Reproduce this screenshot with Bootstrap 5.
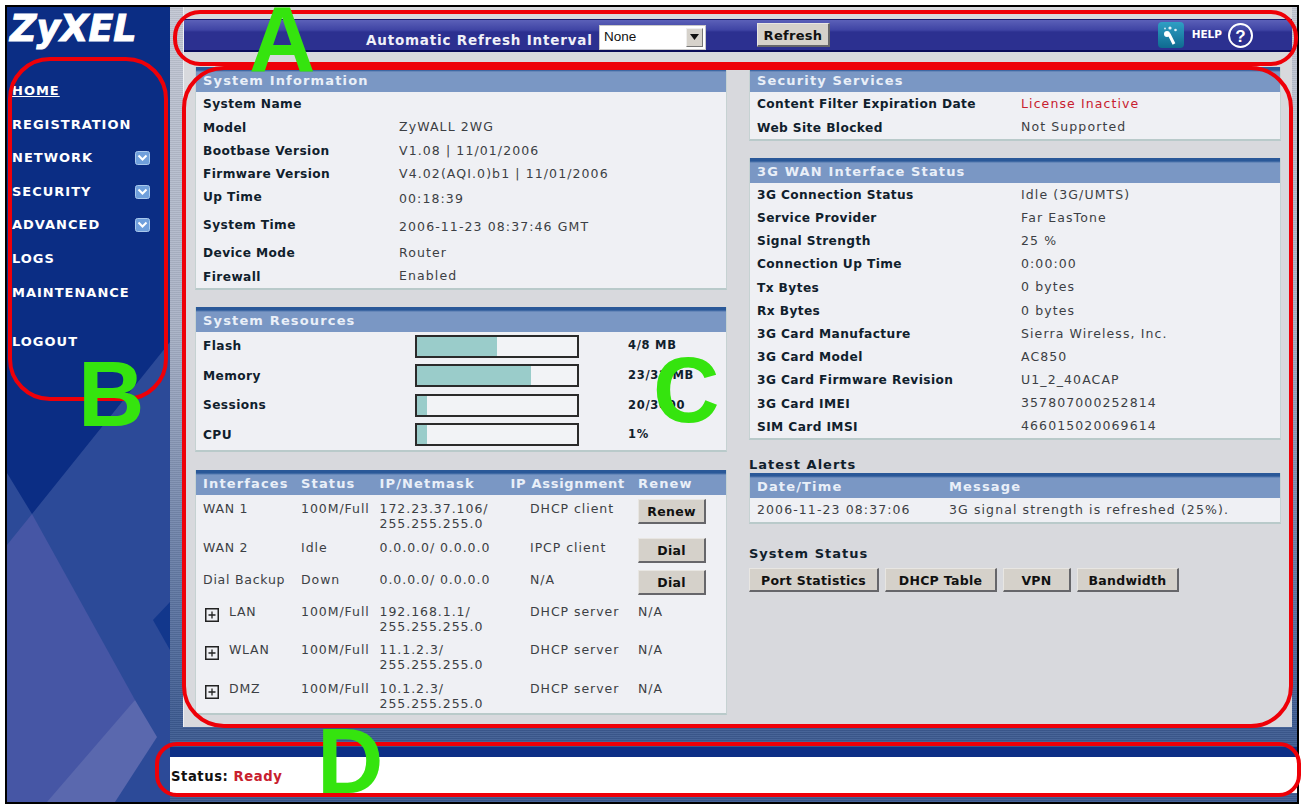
<!DOCTYPE html>
<html lang="en">
<head>
    <meta charset="UTF-8">
    <meta name="viewport" content="width=device-width, initial-scale=1.0">
    <title>ZyXEL Status</title>
    <link href="https://cdn.jsdelivr.net/npm/bootstrap@5.3.3/dist/css/bootstrap.min.css" rel="stylesheet">
    <style>
        html, body { margin: 0; background: #fff; overflow: hidden; }
        body { font-family: "DejaVu Sans", Verdana, sans-serif; font-size: 12.5px; color: #333; }
        .page-wrap { position: relative; width: 1306px; height: 809px; padding: 5px 0 0 5px; }
        .frame-box { width: 1294px; height: 799px; border: 2px solid #000; background: #0d2f86; }

        /* sidebar */
        .side-col { position: relative; width: 163px; flex: none; background: #0b2d84; overflow: hidden; }
        .side-art { position: absolute; left: 0; top: 0; }
        .side-inner { position: relative; }
        .zy-logo { font-weight: 700; font-style: italic; font-size: 36.5px; line-height: 44px; color: #fff; height: 67px; padding-left: 3px; -webkit-text-stroke: 1px #fff; }
        .side-link { display: flex; align-items: center; justify-content: space-between; height: 33.6px; padding: 0 20px 0 5px; color: #fff; font-weight: 700; font-size: 13px; letter-spacing: 1px; text-decoration: none; }
        .side-link.is-on { text-decoration: underline; }
        .side-gap { height: 16px; }

        /* main */
        .main-col { width: 1127px; background: repeating-linear-gradient(180deg, rgba(255,255,255,.06) 0 1px, rgba(0,0,0,.06) 1px 2px), linear-gradient(180deg, #c3c8d4 0%, #a9b2c6 40%, #3d5b92 90%); }
        .content-box { margin: 0 5px 0 13px; height: 720px; background: #d8d9dd; border-left: 1px solid #eef0f4; padding-top: 12px; }
        .top-bar { height: 33px; background: linear-gradient(180deg, #5b60b8 0, #3f44a4 10px, #2c3090 12px, #2c3090 100%); border-top: 1px solid #14186a; border-bottom: 2px solid #0a0c5a; color: #f0f0f8; }
        .refresh-label { width: 415px; padding: 10px 0 0 182px; font-weight: 700; font-size: 13.5px; letter-spacing: .8px; white-space: nowrap; }
        .select-box { width: 107px; height: 25px; margin-top: 4px; background: #fff; border: 1px solid #c8c8c8; }
        .select-box .form-select { height: 100%; padding: 0 0 0 4px; border: 0; border-radius: 0; background: none; font-family: "Liberation Sans", Arial, sans-serif; font-size: 13.5px; color: #111; appearance: none; }
        .select-arrow { width: 17px; height: 19px; margin: 2px; background: #d6d2cb; border: 1px solid #777; border-top-color: #eee; border-left-color: #eee; flex: none; }
        .zy-btn { padding: 1px 0 0; border-radius: 0; background: #d5d1ca; color: #111; font-weight: 700; font-size: 12.5px; letter-spacing: .3px; border: 1px solid #e8e6e2; border-right: 2px solid #66666a; border-bottom: 2px solid #66666a; height: 24px; line-height: 21px; white-space: nowrap; }
        .zy-btn:hover { background: #d5d1ca; color: #111; }
        .btn-refresh { width: 73px; margin-left: 51px; font-size: 13px; }
        .help-txt { font-size: 10.5px; font-weight: 700; color: #fff; margin: 0 5px 0 8px; }
        .help-wrap { padding-right: 38px; }

        .panels-wrap { padding: 15px 0 0 11px; gap: 22px; }
        .panel-col { width: 532px; }
        .zy-panel { border: 0; border-radius: 0; background: #eff0f4; border-left: 1px solid #c6d2d2; border-right: 1px solid #c6d2d2; border-bottom: 2px solid #b9caca; }
        .zy-panel .card-header { height: 25px; padding: 4px 7px 0; border: 0; border-radius: 0; background: linear-gradient(180deg, #2a5898 0, #2a5898 3px, #7a97c4 5px); color: #e9eff8; font-weight: 700; font-size: 13px; letter-spacing: 1.15px; line-height: 20px; white-space: nowrap; display: flex; }
        .zy-panel .card-header span { flex: none; }
        .zy-panel .card-body { padding: 0; }
        .zy-panel .card-body.body-nudge { padding-top: 1px; }
        .info-row { display: flex; height: 23.2px; padding-left: 7px; align-items: center; white-space: nowrap; }
        .info-row .lbl { color: #10202c; font-weight: 700; font-size: 12.2px; letter-spacing: .4px; }
        .info-row .val { letter-spacing: 1.1px; color: #3c3f44; }
        .w-sys { width: 196px; }
        .w-sec { width: 264px; }
        .w-date { width: 192px; }
        .row-tall { height: 33px; }
        .val-low { padding-top: 4px; }
        .txt-red { color: #c8202e !important; }
        .mb-gap { margin-bottom: 18px; }
        .mb-gap-s { margin-bottom: 17px; }

        .res-list { margin-top: -1px; padding-bottom: 1px; }
        .res-row { display: flex; align-items: center; height: 29.6px; padding-left: 7px; }
        .res-row .lbl { width: 212px; color: #10202c; font-weight: 700; font-size: 12.2px; letter-spacing: .4px; }
        .zy-meter { width: 164px; height: 23px; border: 2px solid #2a2a2a; border-radius: 0; background: #f2f3f6; }
        .zy-meter .progress-bar { background: #9accca; }
        .res-row .res-val { margin-left: 49px; font-size: 11.5px; font-weight: 700; color: #10202c; letter-spacing: .7px; white-space: nowrap; }

        .if-row { display: flex; padding-left: 7px; white-space: nowrap; letter-spacing: .95px; color: #3c3f44; line-height: 15px; }
        .if-row > span { flex: none; }
        .if-row .zy-btn { margin-top: -2px; }
        .c-a { width: 98px; letter-spacing: .75px; }
        .c-b { width: 78.5px; }
        .c-c { width: 150.5px; }
        .c-d { width: 108px; }
        .hd-a { width: 98px; } .hd-b { width: 78.5px; } .hd-c { width: 131px; } .hd-d { width: 127.5px; letter-spacing: .7px; }
        .plus-box { display: inline-block; width: 14px; height: 14px; margin: 4px 10px 0 2px; vertical-align: top; }
        .if-btn { width: 68px; height: 25px; }
        .if-pad-a { height: 38.6px; padding-top: 6.5px; }
        .if-pad-b { height: 32px; padding-top: 6.5px; }
        .plain-title { color: #10202c; font-weight: 700; font-size: 13px; letter-spacing: 1px; line-height: 16px; white-space: nowrap; }
        .alerts-title { margin-top: 17px; }
        .status-title { margin-top: 22px; }
        .status-btns { gap: 6px; margin-top: 6px; }
        .b1 { width: 130px; } .b2 { width: 112px; } .b3 { width: 68px; } .b4 { width: 102px; }

        .status-bar { margin-top: 20px; height: 10px; background: #0d2f86; }
        .status-white { height: 36px; background: #fff; color: #111; font-weight: 700; font-size: 13.2px; letter-spacing: .55px; padding: 11px 0 0 1px; line-height: 18px; }

        /* annotation marks over the shot */
        .mark-oval { position: absolute; border: 4px solid #ee0008; pointer-events: none; }
        .oval-a { left: 173px; top: 10px; width: 1125px; height: 56px; border-radius: 27px; }
        .oval-b { left: 8px; top: 57px; width: 160px; height: 344px; border-radius: 42px; }
        .oval-c { left: 182px; top: 66px; width: 1111px; height: 662px; border-radius: 42px; }
        .oval-d { left: 155px; top: 742px; width: 1146px; height: 55px; border-radius: 22px; }
        .mark-let { position: absolute; font-family: "Liberation Sans", Arial, sans-serif; font-weight: 700; font-size: 92px; line-height: .75; color: #35e40e; pointer-events: none; }
        .let-a { left: 249px; top: 5px; }
        .let-b { left: 78px; top: 360px; }
        .let-c { left: 653px; top: 356px; }
        .let-d { left: 317px; top: 727px; }
    </style>
</head>
<body>
<div class="page-wrap">
    <div class="frame-box d-flex">

        <div class="side-col">
            <svg class="side-art" width="163" height="795" viewBox="0 0 163 795">
                <polygon points="0,466 25,507 163,335 163,795 0,795" fill="#2c4a98"/>
                <polygon points="146,613 163,595 163,643" fill="#12378c"/>
                <polygon points="25,507 128,693 71,795 0,795 0,538" fill="#4656a5"/>
                <polygon points="128,693 150,730 108,795 40,795" fill="#5a68ae"/>
            </svg>
            <div class="side-inner">
                <div class="zy-logo">ZyXEL</div>
                <a class="side-link is-on" href="#">HOME</a>
                <a class="side-link" href="#">REGISTRATION</a>
                <a class="side-link" href="#">NETWORK
                    <svg width="15" height="14" viewBox="0 0 15 14"><rect x=".5" y=".5" width="14" height="13" rx="2" fill="#6f9fdc" stroke="#a9c8ec"/><path d="M3.5 4.5l4 4 4-4" fill="none" stroke="#fff" stroke-width="2"/></svg></a>
                <a class="side-link" href="#">SECURITY
                    <svg width="15" height="14" viewBox="0 0 15 14"><rect x=".5" y=".5" width="14" height="13" rx="2" fill="#6f9fdc" stroke="#a9c8ec"/><path d="M3.5 4.5l4 4 4-4" fill="none" stroke="#fff" stroke-width="2"/></svg></a>
                <a class="side-link" href="#">ADVANCED
                    <svg width="15" height="14" viewBox="0 0 15 14"><rect x=".5" y=".5" width="14" height="13" rx="2" fill="#6f9fdc" stroke="#a9c8ec"/><path d="M3.5 4.5l4 4 4-4" fill="none" stroke="#fff" stroke-width="2"/></svg></a>
                <a class="side-link" href="#">LOGS</a>
                <a class="side-link" href="#">MAINTENANCE</a>
                <div class="side-gap"></div>
                <a class="side-link" href="#">LOGOUT</a>
            </div>
        </div>

        <div class="main-col">
            <div class="content-box">
                <div class="top-bar d-flex align-items-center">
                    <div class="refresh-label">Automatic Refresh Interval</div>
                    <div class="select-box d-flex align-items-center">
                        <select class="form-select"><option>None</option></select>
                        <span class="select-arrow d-flex align-items-center justify-content-center">
                            <svg width="9" height="6" viewBox="0 0 9 6"><path d="M0 0h9L4.5 6z" fill="#111"/></svg>
                        </span>
                    </div>
                    <button class="btn zy-btn btn-refresh" type="button">Refresh</button>
                    <div class="ms-auto d-flex align-items-center help-wrap">
                        <svg width="26" height="26" viewBox="0 0 26 26">
                            <defs><linearGradient id="wandBg" x1="0" y1="0" x2="0" y2="1"><stop offset="0" stop-color="#2f9fc4"/><stop offset="1" stop-color="#0f6a90"/></linearGradient></defs>
                            <rect width="26" height="26" rx="4" fill="url(#wandBg)"/>
                            <path d="M11 12l5 10" stroke="#fff" stroke-width="3"/>
                            <circle cx="9" cy="12" r="3" fill="#fff"/>
                            <circle cx="12" cy="6" r="1.6" fill="#e4f2f8"/>
                            <circle cx="17.5" cy="8" r="1.3" fill="#e4f2f8"/>
                            <circle cx="7" cy="6.5" r="1" fill="#cfe6f0"/>
                        </svg>
                        <span class="help-txt">HELP</span>
                        <svg width="27" height="27" viewBox="0 0 27 27"><circle cx="13.5" cy="13.5" r="11.5" fill="none" stroke="#fff" stroke-width="2"/><text x="13.5" y="19.5" text-anchor="middle" font-family="Liberation Sans, sans-serif" font-weight="700" font-size="17" fill="#fff">?</text></svg>
                    </div>
                </div>

                <div class="panels-wrap d-flex">
                    <div class="panel-col">
                        <div class="card zy-panel mb-gap-s">
                            <div class="card-header">System Information</div>
                            <div class="card-body body-nudge">
                                <div class="info-row"><span class="lbl w-sys">System Name</span></div>
                                <div class="info-row"><span class="lbl w-sys">Model</span><span class="val">ZyWALL 2WG</span></div>
                                <div class="info-row"><span class="lbl w-sys">Bootbase Version</span><span class="val">V1.08 | 11/01/2006</span></div>
                                <div class="info-row"><span class="lbl w-sys">Firmware Version</span><span class="val">V4.02(AQI.0)b1 | 11/01/2006</span></div>
                                <div class="info-row"><span class="lbl w-sys">Up Time</span><span class="val val-low">00:18:39</span></div>
                                <div class="info-row row-tall"><span class="lbl w-sys">System Time</span><span class="val val-low">2006-11-23 08:37:46 GMT</span></div>
                                <div class="info-row"><span class="lbl w-sys">Device Mode</span><span class="val">Router</span></div>
                                <div class="info-row"><span class="lbl w-sys">Firewall</span><span class="val">Enabled</span></div>
                            </div>
                        </div>

                        <div class="card zy-panel mb-gap">
                            <div class="card-header">System Resources</div>
                            <div class="card-body res-list">
                                <div class="res-row"><span class="lbl">Flash</span><div class="progress zy-meter"><div class="progress-bar" style="width:50%"></div></div><span class="res-val">4/8 MB</span></div>
                                <div class="res-row"><span class="lbl">Memory</span><div class="progress zy-meter"><div class="progress-bar" style="width:71%"></div></div><span class="res-val">23/32 MB</span></div>
                                <div class="res-row"><span class="lbl">Sessions</span><div class="progress zy-meter"><div class="progress-bar" style="width:6%"></div></div><span class="res-val">20/3000</span></div>
                                <div class="res-row"><span class="lbl">CPU</span><div class="progress zy-meter"><div class="progress-bar" style="width:6%"></div></div><span class="res-val">1%</span></div>
                            </div>
                        </div>

                        <div class="card zy-panel">
                            <div class="card-header"><span class="hd-a">Interfaces</span><span class="hd-b">Status</span><span class="hd-c">IP/Netmask</span><span class="hd-d">IP Assignment</span><span>Renew</span></div>
                            <div class="card-body">
                                <div class="if-row if-pad-a"><span class="c-a">WAN 1</span><span class="c-b">100M/Full</span><span class="c-c">172.23.37.106/<br>255.255.255.0</span><span class="c-d">DHCP client</span><button class="btn zy-btn if-btn" type="button">Renew</button></div>
                                <div class="if-row if-pad-b"><span class="c-a">WAN 2</span><span class="c-b">Idle</span><span class="c-c">0.0.0.0/ 0.0.0.0</span><span class="c-d">IPCP client</span><button class="btn zy-btn if-btn" type="button">Dial</button></div>
                                <div class="if-row if-pad-b"><span class="c-a">Dial Backup</span><span class="c-b">Down</span><span class="c-c">0.0.0.0/ 0.0.0.0</span><span class="c-d">N/A</span><button class="btn zy-btn if-btn" type="button">Dial</button></div>
                                <div class="if-row if-pad-a"><span class="c-a"><svg class="plus-box" viewBox="0 0 14 14"><rect x=".75" y=".75" width="12.5" height="12.5" fill="none" stroke="#222" stroke-width="1.5"/><path d="M3.5 7h7M7 3.5v7" stroke="#222" stroke-width="1.3"/></svg>LAN</span><span class="c-b">100M/Full</span><span class="c-c">192.168.1.1/<br>255.255.255.0</span><span class="c-d">DHCP server</span><span>N/A</span></div>
                                <div class="if-row if-pad-a"><span class="c-a"><svg class="plus-box" viewBox="0 0 14 14"><rect x=".75" y=".75" width="12.5" height="12.5" fill="none" stroke="#222" stroke-width="1.5"/><path d="M3.5 7h7M7 3.5v7" stroke="#222" stroke-width="1.3"/></svg>WLAN</span><span class="c-b">100M/Full</span><span class="c-c">11.1.2.3/<br>255.255.255.0</span><span class="c-d">DHCP server</span><span>N/A</span></div>
                                <div class="if-row if-pad-a"><span class="c-a"><svg class="plus-box" viewBox="0 0 14 14"><rect x=".75" y=".75" width="12.5" height="12.5" fill="none" stroke="#222" stroke-width="1.5"/><path d="M3.5 7h7M7 3.5v7" stroke="#222" stroke-width="1.3"/></svg>DMZ</span><span class="c-b">100M/Full</span><span class="c-c">10.1.2.3/<br>255.255.255.0</span><span class="c-d">DHCP server</span><span>N/A</span></div>
                            </div>
                        </div>
                    </div>

                    <div class="panel-col">
                        <div class="card zy-panel mb-gap-s">
                            <div class="card-header">Security Services</div>
                            <div class="card-body body-nudge">
                                <div class="info-row"><span class="lbl w-sec">Content Filter Expiration Date</span><span class="val txt-red">License Inactive</span></div>
                                <div class="info-row"><span class="lbl w-sec">Web Site Blocked</span><span class="val">Not Supported</span></div>
                            </div>
                        </div>

                        <div class="card zy-panel">
                            <div class="card-header">3G WAN Interface Status</div>
                            <div class="card-body">
                                <div class="info-row"><span class="lbl w-sec">3G Connection Status</span><span class="val">Idle (3G/UMTS)</span></div>
                                <div class="info-row"><span class="lbl w-sec">Service Provider</span><span class="val">Far EasTone</span></div>
                                <div class="info-row"><span class="lbl w-sec">Signal Strength</span><span class="val">25 %</span></div>
                                <div class="info-row"><span class="lbl w-sec">Connection Up Time</span><span class="val">0:00:00</span></div>
                                <div class="info-row"><span class="lbl w-sec">Tx Bytes</span><span class="val">0 bytes</span></div>
                                <div class="info-row"><span class="lbl w-sec">Rx Bytes</span><span class="val">0 bytes</span></div>
                                <div class="info-row"><span class="lbl w-sec">3G Card Manufacture</span><span class="val">Sierra Wireless, Inc.</span></div>
                                <div class="info-row"><span class="lbl w-sec">3G Card Model</span><span class="val">AC850</span></div>
                                <div class="info-row"><span class="lbl w-sec">3G Card Firmware Revision</span><span class="val">U1_2_40ACAP</span></div>
                                <div class="info-row"><span class="lbl w-sec">3G Card IMEI</span><span class="val">357807000252814</span></div>
                                <div class="info-row"><span class="lbl w-sec">SIM Card IMSI</span><span class="val">466015020069614</span></div>
                            </div>
                        </div>

                        <div class="plain-title alerts-title">Latest Alerts</div>
                        <div class="card zy-panel">
                            <div class="card-header"><span class="w-date">Date/Time</span><span>Message</span></div>
                            <div class="card-body">
                                <div class="info-row"><span class="val w-date">2006-11-23 08:37:06</span><span class="val">3G signal strength is refreshed (25%).</span></div>
                            </div>
                        </div>

                        <div class="plain-title status-title">System Status</div>
                        <div class="status-btns d-flex">
                            <button class="btn zy-btn b1" type="button">Port Statistics</button>
                            <button class="btn zy-btn b2" type="button">DHCP Table</button>
                            <button class="btn zy-btn b3" type="button">VPN</button>
                            <button class="btn zy-btn b4" type="button">Bandwidth</button>
                        </div>
                    </div>
                </div>
            </div>

            <div class="status-bar"></div>
            <div class="status-white">Status: <span class="txt-red">Ready</span></div>
        </div>
    </div>

    <div class="mark-oval oval-a"></div>
    <div class="mark-oval oval-b"></div>
    <div class="mark-oval oval-c"></div>
    <div class="mark-oval oval-d"></div>
    <div class="mark-let let-a">A</div>
    <div class="mark-let let-b">B</div>
    <div class="mark-let let-c">C</div>
    <div class="mark-let let-d">D</div>
</div>
<script src="https://cdn.jsdelivr.net/npm/bootstrap@5.3.3/dist/js/bootstrap.bundle.min.js"></script>
</body>
</html>
